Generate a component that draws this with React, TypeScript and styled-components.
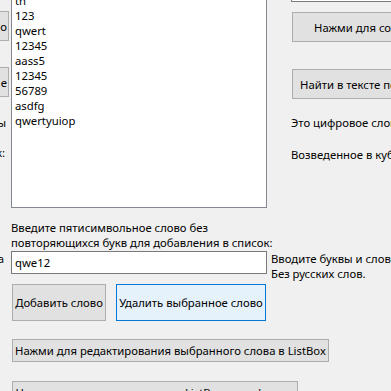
import { FC } from 'react';
import styled, { createGlobalStyle } from 'styled-components';

const GlobalStyle = createGlobalStyle`
    html, body {
        margin: 0;
        padding: 0;
        background: #f0f0f0;
    }
    * {
        box-sizing: border-box;
    }
`;

const FormWindow = styled.div`
    width: 391px;
    height: 391px;
    overflow: hidden;
    background: #f0f0f0;
    font-family: 'Noto Sans', 'Liberation Sans', sans-serif;
    font-size: 11.3px;
    color: #000;
`;

const TopArea = styled.div`
    display: flex;
    align-items: flex-start;
    margin-top: -9px;
`;

const ClippedColumn = styled.div`
    width: 9px;
    flex: none;
    overflow: hidden;
    display: flex;
    flex-direction: column;
    align-items: flex-end;
`;

const ClippedButton = styled.div<{ $top: number }>`
    flex: none;
    width: 60px;
    height: 30px;
    margin-top: ${p => p.$top}px;
    background: #e1e1e1;
    border: 1px solid #adadad;
    display: flex;
    align-items: center;
    justify-content: flex-end;
    padding-right: 1px;
    white-space: nowrap;
    line-height: 15px;
`;

const ClippedLabel = styled.div<{ $top: number; $pad: number }>`
    flex: none;
    margin-top: ${p => p.$top}px;
    line-height: 15px;
    white-space: nowrap;
    padding-right: ${p => p.$pad}px;
`;

const ListBox = styled.div`
    flex: none;
    width: 256px;
    height: 217px;
    margin-left: 2px;
    background: #fff;
    border: 1px solid #828790;
    padding: 1px 3px;
    overflow: hidden;
`;

const ListItem = styled.div`
    line-height: 15px;
    height: 15px;
    white-space: nowrap;
`;

const RightColumn = styled.div`
    flex: 1;
    min-width: 0;
    margin-left: 24px;
    display: flex;
    flex-direction: column;
`;

const OutputBox = styled.div`
    width: 200px;
    height: 11px;
    background: #fff;
    border: 1px solid #7a7a7a;
`;

const WinButton = styled.button<{ $w: number; $h: number; $top?: number; $left?: number; $indent?: number; $focused?: boolean }>`
    flex: none;
    width: ${p => p.$w}px;
    height: ${p => p.$h}px;
    margin: ${p => p.$top ?? 0}px 0 0 ${p => p.$left ?? 0}px;
    padding: 0 0 0 ${p => p.$indent ?? 0}px;
    background: ${p => (p.$focused ? '#e5f1fb' : '#e1e1e1')};
    border: 1px solid ${p => (p.$focused ? '#0078d7' : '#adadad')};
    border-radius: 0;
    font: inherit;
    color: #000;
    line-height: 15px;
    white-space: nowrap;
    overflow: hidden;
    display: flex;
    align-items: center;
    justify-content: ${p => (p.$indent !== undefined ? 'flex-start' : 'center')};
`;

const InfoLabel = styled.div<{ $top: number }>`
    margin-top: ${p => p.$top}px;
    line-height: 15px;
    white-space: nowrap;
`;

const BottomArea = styled.div`
    display: flex;
    flex-direction: column;
`;

const PromptLabel = styled.div`
    margin: 12px 0 0 11px;
    line-height: 15px;
    white-space: nowrap;
`;

const Row = styled.div<{ $top: number }>`
    display: flex;
    align-items: flex-start;
    margin-top: ${p => p.$top}px;
`;

const WordInput = styled.input`
    flex: none;
    width: 256px;
    height: 23px;
    margin-left: 2px;
    padding: 0 3px;
    background: #fff;
    border: 1px solid #7a7a7a;
    border-radius: 0;
    outline: none;
    font: inherit;
    color: #000;
`;

const HintLabel = styled.div`
    margin-left: 4px;
    line-height: 15px;
    white-space: nowrap;
`;

const ButtonRow = styled.div`
    display: flex;
    gap: 10px;
    margin: 3px 0 0 12px;
`;

const items = ['tn', '123', 'qwert', '12345', 'aass5', '12345', '56789', 'asdfg', 'qwertyuiop'];

const App: FC = () => {
    return (
        <>
            <GlobalStyle />
            <FormWindow>
                <TopArea>
                    <ClippedColumn>
                        <ClippedButton $top={20}>Открыть файл о</ClippedButton>
                        <ClippedButton $top={26}>Очистить все е</ClippedButton>
                        <ClippedLabel $top={18} $pad={3}>Слов: ы</ClippedLabel>
                        <ClippedLabel $top={15} $pad={4}>Список:</ClippedLabel>
                    </ClippedColumn>
                    <ListBox>
                        {items.map((item, i) => (
                            <ListItem key={i}>{item}</ListItem>
                        ))}
                    </ListBox>
                    <RightColumn>
                        <OutputBox />
                        <WinButton $w={200} $h={30} $top={10} $left={1} $indent={21}>
                            Нажми для сохранения в файл
                        </WinButton>
                        <WinButton $w={200} $h={30} $top={27} $left={1} $indent={7}>
                            Найти в тексте повторяющиеся слова
                        </WinButton>
                        <InfoLabel $top={16}>Это цифровое слово</InfoLabel>
                        <InfoLabel $top={17}>Возведенное в куб число:</InfoLabel>
                    </RightColumn>
                </TopArea>
                <BottomArea>
                    <PromptLabel>
                        Введите пятисимвольное слово без
                        <br />
                        повторяющихся букв для добавления в список:
                    </PromptLabel>
                    <Row $top={1}>
                        <ClippedColumn>
                            <ClippedLabel $top={0} $pad={5}>Слово: а</ClippedLabel>
                        </ClippedColumn>
                        <WordInput defaultValue='qwe12' />
                        <HintLabel>
                            Вводите буквы и слова на английском.
                            <br />
                            Без русских слов.
                        </HintLabel>
                    </Row>
                    <ButtonRow>
                        <WinButton $w={94} $h={37}>Добавить слово</WinButton>
                        <WinButton $w={150} $h={37} $focused>
                            Удалить выбранное слово
                        </WinButton>
                    </ButtonRow>
                    <WinButton $w={317} $h={23} $top={18} $left={12}>
                        Нажми для редактирования выбранного слова в ListBox
                    </WinButton>
                    <Row $top={19}>
                        <ClippedColumn>
                            <ClippedLabel $top={4} $pad={5}>Итог: и</ClippedLabel>
                        </ClippedColumn>
                        <WinButton $w={286} $h={23} $left={3}>
                            Нажми для сортировки слов в ListBox по алфавиту
                        </WinButton>
                    </Row>
                </BottomArea>
            </FormWindow>
        </>
    );
};

export default App;
